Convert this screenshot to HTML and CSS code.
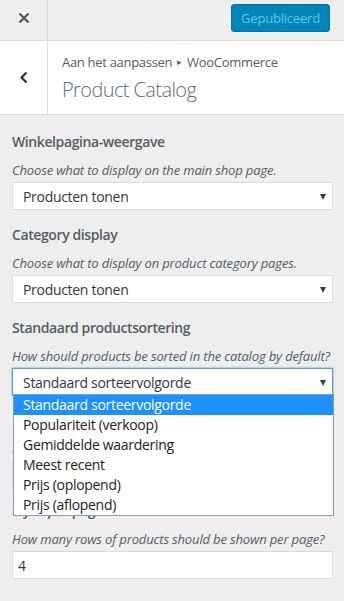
FILE: index.html
```html
<!DOCTYPE html>
<html lang="nl">
<head>
<meta charset="utf-8">
<title>Product Catalog</title>
<link rel="stylesheet" href="styles.css">
</head>
<body>
<div class="topbar">
  <div class="close-btn">
    <svg width="12" height="12" viewBox="0 0 12 12"><path d="M1.5 1.5 L10.5 10.5 M10.5 1.5 L1.5 10.5" stroke="#555d66" stroke-width="2.4" fill="none"/></svg>
  </div>
  <div class="actions"><span class="publish">Gepubliceerd</span></div>
</div>
<div class="panel-header">
  <div class="back-btn">
    <svg width="10" height="13" viewBox="0 0 10 13"><path d="M7.5 1.5 L2.5 6.5 L7.5 11.5" stroke="#23282d" stroke-width="2" fill="none"/></svg>
  </div>
  <div class="titles">
    <div class="crumb">Aan het aanpassen <span class="sep">&#9656;</span> WooCommerce</div>
    <div class="title">Product Catalog</div>
  </div>
</div>
<ul class="controls">
  <li class="control">
    <span class="ctl-title">Winkelpagina-weergave</span>
    <span class="ctl-desc">Choose what to display on the main shop page.</span>
    <div class="select">Producten tonen<span class="arrow"></span></div>
  </li>
  <li class="control">
    <span class="ctl-title">Category display</span>
    <span class="ctl-desc">Choose what to display on product category pages.</span>
    <div class="select">Producten tonen<span class="arrow"></span></div>
  </li>
  <li class="control">
    <span class="ctl-title">Standaard productsortering</span>
    <span class="ctl-desc">How should products be sorted in the catalog by default?</span>
    <div class="select-wrap">
      <div class="select focused">Standaard sorteervolgorde<span class="arrow"></span></div>
      <ul class="dropdown">
        <li class="opt active">Standaard sorteervolgorde</li>
        <li class="opt">Populariteit (verkoop)</li>
        <li class="opt">Gemiddelde waardering</li>
        <li class="opt">Meest recent</li>
        <li class="opt">Prijs (oplopend)</li>
        <li class="opt">Prijs (aflopend)</li>
      </ul>
    </div>
  </li>
  <li class="control number">
    <span class="ctl-title">Producten per rij</span>
    <span class="ctl-desc">How many products should be shown per row?</span>
    <div class="input">4</div>
  </li>
  <li class="control number">
    <span class="ctl-title">Rijen per pagina</span>
    <span class="ctl-desc">How many rows of products should be shown per page?</span>
    <div class="input">4</div>
  </li>
</ul>
</body>
</html>
```
FILE: styles.css
```css
* { box-sizing: border-box; }
html, body {
  margin: 0;
  padding: 0;
  background: #eeeeee;
  font-family: "Open Sans", "Noto Sans", sans-serif;
  color: #555d66;
  height: 100%;
  overflow: hidden;
}
.topbar {
  height: 41px;
  display: flex;
  align-items: stretch;
  border-bottom: 1px solid #dddddd;
  background: #eeeeee;
}
.close-btn {
  width: 48px;
  border-right: 1px solid #dddddd;
  display: flex;
  align-items: center;
  justify-content: center;
  padding-bottom: 4px;
}
.actions {
  flex: 1;
  display: flex;
  justify-content: flex-end;
  align-items: flex-start;
  padding: 4px 14px 0 0;
}
.publish {
  display: flex;
  align-items: center;
  justify-content: center;
  width: 99px;
  height: 28px;
  background: #0085ba;
  border: 1px solid #0073aa;
  border-radius: 3px;
  color: #66c6e4;
  font-size: 13px;
  letter-spacing: -0.2px;
}
.panel-header {
  height: 74px;
  display: flex;
  background: #ffffff;
  border-bottom: 1px solid #dddddd;
}
.back-btn {
  width: 48px;
  border-right: 1px solid #dddddd;
  display: flex;
  align-items: center;
  justify-content: center;
}
.titles {
  padding: 12px 0 0 14px;
}
.crumb {
  font-size: 13px;
  line-height: 18px;
  color: #555d66;
  letter-spacing: -0.3px;
}
.crumb .sep {
  font-size: 9px;
  position: relative;
  top: -2px;
  padding: 0 2px;
}
.title {
  margin-top: 4px;
  font-size: 20px;
  line-height: 26px;
  font-weight: 300;
  color: #656d75;
  letter-spacing: -0.6px;
}
.controls {
  list-style: none;
  margin: 0;
  padding: 17px 11px 0 12px;
}
.control {
  display: flex;
  flex-direction: column;
  margin-bottom: 15px;
}
.control.number { margin-bottom: 12px; }
.ctl-title {
  font-size: 14px;
  line-height: 20px;
  font-weight: 600;
  color: #555d66;
  letter-spacing: -0.4px;
}
.ctl-desc {
  margin-top: 9px;
  font-size: 13px;
  line-height: 18px;
  font-style: italic;
  color: #555d66;
  letter-spacing: -0.15px;
}
.select, .input {
  margin-top: 3px;
  height: 28px;
  background: #ffffff;
  border: 1px solid #dddddd;
  font-size: 14px;
  color: #32373c;
  display: flex;
  align-items: center;
  letter-spacing: -0.3px;
}
.select {
  padding-left: 10px;
  position: relative;
}
.input { padding-left: 5px; }
.arrow {
  position: absolute;
  right: 6px;
  top: 11px;
  width: 0;
  height: 0;
  border-left: 3px solid transparent;
  border-right: 3px solid transparent;
  border-top: 6px solid #3c3c3c;
}
.select-wrap {
  position: relative;
  display: flex;
  flex-direction: column;
}
.select.focused {
  border-color: #5b9dd9;
  box-shadow: 0 0 2px rgba(30, 140, 190, 0.8);
}
.dropdown {
  position: absolute;
  top: 29px;
  left: 1px;
  right: -1px;
  margin: 0;
  padding: 0;
  list-style: none;
  background: #ffffff;
  border: 1px solid #7f9ccc;
  z-index: 5;
}
.opt {
  height: 20px;
  line-height: 20px;
  padding-left: 9px;
  font-size: 14px;
  color: #222222;
  letter-spacing: -0.3px;
}
.opt.active {
  background: #1e90ff;
  color: #ffffff;
}
```
